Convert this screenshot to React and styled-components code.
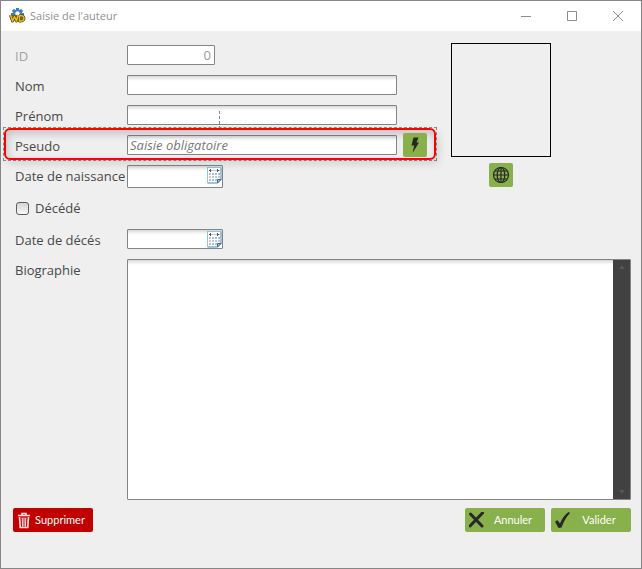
import React from 'react'
import styled, { createGlobalStyle, css } from 'styled-components'

const GlobalStyle = createGlobalStyle`
  * {
    box-sizing: border-box;
  }

  body {
    margin: 0;
    background: #efefef;
    font-family: "Open Sans", "Noto Sans", sans-serif;
    font-size: 13px;
    color: #484848;
  }
`

const Window = styled.div`
  display: flex;
  flex-direction: column;
  min-height: 100vh;
  border: 1px solid #868686;
  background: #efefef;
`

const TitleBar = styled.header`
  display: flex;
  align-items: center;
  height: 30px;
  padding-left: 8px;
  background: white;
`

const Title = styled.h1`
  flex: 1;
  margin: 0 0 0 4px;
  font-size: 11px;
  line-height: 14px;
  font-weight: normal;
  color: #8f8f8f;
`

const WindowButton = styled.button`
  display: flex;
  align-items: center;
  justify-content: center;
  width: 46px;
  height: 30px;
  padding: 0;
  border: none;
  background: none;
  color: #8c8c8c;
`

const Form = styled.form`
  flex: 1;
  display: flex;
  flex-direction: column;
  padding: 12px 10px 36px 12px;
`

const Top = styled.div`
  display: flex;
  gap: 24px;
`

const Fields = styled.div`
  flex: 0 1 414px;
  display: flex;
  flex-direction: column;
  gap: 10px;
  padding-top: 2px;
`

const Row = styled.div`
  display: flex;
  align-items: flex-start;
  height: ${props => props.$height || 20}px;
`

const Label = styled.label`
  flex: none;
  width: 114px;
  padding: 2px 0 0 2px;
  line-height: 18px;
  white-space: nowrap;
  color: ${props => (props.$muted ? '#a2a2a2' : 'inherit')};
`

const boxLook = css`
  border: 1px solid #848484;
  border-radius: 1px;
  background: linear-gradient(#d6d6d6, #f4f4f4 3px, white 5px);
`

const Input = styled.input`
  ${boxLook}
  flex: ${props => (props.$width ? 'none' : '1')};
  width: ${props => (props.$width ? props.$width + 'px' : 'auto')};
  min-width: 0;
  height: 100%;
  margin-right: ${props => (props.$width ? 0 : 30)}px;
  padding: 0 3px;
  font: inherit;
  color: inherit;
  outline: none;

  &:disabled {
    background: white;
    color: #9a9a9a;
    text-align: right;
  }
`

const RequiredInput = styled(Input)`
  margin-right: 6px;
  padding: 0 2px;

  &::placeholder {
    color: #777;
    font-style: italic;
    opacity: 1;
  }
`

// the row is outlined in red, with the dotted selection frame around it
const MarkedRow = styled(Row)`
  position: relative;
  align-items: center;

  &::before {
    content: '';
    position: absolute;
    inset: -8px -10px -6px -10px;
    border: 1px dashed #8a8a8a;
    pointer-events: none;
  }

  &::after {
    content: '';
    position: absolute;
    inset: -7px -9px -5px -9px;
    border: 2px solid #ff0000;
    border-radius: 6px;
    box-shadow: 3px 4px 8px rgba(0, 0, 0, 0.12), inset 2px 4px 8px rgba(0, 0, 0, 0.18);
    pointer-events: none;
  }
`

const Guide = styled.span`
  position: absolute;
  left: 206px;
  top: -24px;
  height: 18px;
  border-left: 1px dashed #8a8a8a;
`

const IconButton = styled.button`
  position: relative;
  z-index: 1;
  flex: none;
  display: flex;
  align-items: center;
  justify-content: center;
  width: 24px;
  height: 24px;
  padding: 0;
  border: none;
  border-radius: 2px;
  background: #88b04b;
  color: #272727;
`

const DateBox = styled.div`
  ${boxLook}
  display: flex;
  align-items: flex-start;
  width: 96px;
  height: 100%;
`

const DateInput = styled.input`
  flex: 1;
  align-self: stretch;
  min-width: 0;
  padding: 0 3px;
  border: none;
  background: none;
  font: inherit;
  outline: none;
`

const CalendarButton = styled.button`
  display: flex;
  padding: 1px 0 0;
  border: none;
  background: none;
`

const CheckLabel = styled.label`
  display: flex;
  align-items: center;
  gap: 6px;
  padding-left: 3px;
  line-height: 20px;
`

const CheckBox = styled.input`
  appearance: none;
  width: 13px;
  height: 13px;
  margin: 0;
  border: 1px solid #5c5c5c;
  border-radius: 3px;
  background: linear-gradient(#d2d6d6, #f8f8f8);
`

const PhotoColumn = styled.div`
  display: flex;
  flex-direction: column;
  align-items: center;
  gap: 6px;
`

const Photo = styled.div`
  width: 100px;
  height: 114px;
  border: 1px solid black;
`

const BioRow = styled.div`
  flex: 1;
  display: flex;
  align-items: stretch;
  min-height: 120px;
  margin: 10px 0 8px;
`

const BioBox = styled.div`
  ${boxLook}
  flex: 1;
  display: flex;
`

const BioText = styled.textarea`
  flex: 1;
  min-width: 0;
  padding: 3px;
  border: none;
  background: none;
  font: inherit;
  resize: none;
  outline: none;
`

const ScrollBar = styled.div`
  display: flex;
  flex-direction: column;
  justify-content: space-between;
  align-items: center;
  width: 17px;
  padding: 5px 0;
  background: #414141;
`

const Footer = styled.footer`
  display: flex;
  gap: 6px;
`

const Button = styled.button`
  display: flex;
  align-items: center;
  width: 80px;
  height: 24px;
  padding: 0 4px;
  border: none;
  border-radius: 2px;
  background: ${props => (props.$danger ? '#c10000' : '#88b04b')};
  color: white;
  font-family: Lato, "Open Sans", sans-serif;
  font-size: 11px;
  line-height: 14px;
  margin-right: ${props => (props.$danger ? 'auto' : 0)};
`

const ButtonText = styled.span`
  flex: 1;
  text-align: center;
`

const LogoIcon = () => (
  <svg width="17" height="16" viewBox="0 0 17 16">
    <g fill="#3f7fb8">
      <circle cx="8.5" cy="6.5" r="5" />
      <path d="M7 0h3v13H7zM2 5h13v3H2z" />
      <path d="M7 0h3v13H7z" transform="rotate(45 8.5 6.5)" />
      <path d="M7 0h3v13H7z" transform="rotate(-45 8.5 6.5)" />
    </g>
    <circle cx="8.5" cy="5.5" r="2.200" fill="white" />
    <g fill="none" strokeLinejoin="round">
      <path d="M1.500 7l2 6 2-4.500 2 4.500 1.500-6M10.500 7.500v5.500c6 .5 6-6 0-5.500" stroke="#4a4020" strokeWidth="3" />
      <path d="M1.500 7l2 6 2-4.500 2 4.500 1.500-6M10.500 7.500v5.500c6 .5 6-6 0-5.500" stroke="#f6bd17" strokeWidth="1.500" />
    </g>
  </svg>
)

const BoltIcon = () => (
  <svg width="12" height="16" viewBox="0 0 12 16">
    <path d="M4.500 0.500H9.500L7.500 5.500H10L3.500 16 5.200 8.500H2.500z" fill="currentColor" />
  </svg>
)

const GlobeIcon = () => (
  <svg width="18" height="18" viewBox="0 0 18 18" fill="none" stroke="currentColor" strokeWidth="1.200">
    <circle cx="9" cy="9" r="7.500" />
    <ellipse cx="9" cy="9" rx="3.800" ry="7.500" />
    <path d="M9 1.500v15M1.500 9h15M2.800 5h12.400M2.800 13h12.400" />
  </svg>
)

const CalendarIcon = () => (
  <svg width="15" height="17" viewBox="0 0 15 17">
    <path d="M.5.5h13.500v12L10.500 16H.5z" fill="white" stroke="#3f86bd" />
    <path d="M.5 16V.5H14" fill="none" stroke="#8cc8e0" />
    <path d="M2 3.500h11" stroke="#c4c4c4" />
    <path d="M3 2h1v3H3zM10 2h1v3h-1zM2 3h2v1H2zM10 3h2v1h-2z" fill="#555" />
    <g strokeWidth="2" strokeDasharray="2 1">
      <path d="M2 7h11" stroke="#a2c0f8" />
      <path d="M2 10h11" stroke="#cbcbcb" />
      <path d="M2 13h8" stroke="#a2c0f8" />
    </g>
    <path d="M10.500 16v-3.500H14z" fill="#a9cbe4" stroke="#2d6ea8" />
  </svg>
)

const TrashIcon = () => (
  <svg width="14" height="17" viewBox="0 0 14 17" fill="none" stroke="#fbe9e9">
    <path d="M1 3.500h12M5 3V1.500h4V3" strokeWidth="1.500" />
    <path d="M2.500 5l.8 10.500h7.400L11.500 5" strokeWidth="1.600" />
    <path d="M5.200 5.500l.3 9M7 5.500v9M8.800 5.500l-.3 9" strokeWidth="1" />
  </svg>
)

const CrossIcon = () => (
  <svg width="16" height="16" viewBox="0 0 16 16">
    <path d="M1.500 2L13 14M13.500 1L1 14" stroke="#272727" strokeWidth="3" strokeLinecap="round" />
  </svg>
)

const CheckIcon = () => (
  <svg width="16" height="16" viewBox="0 0 16 16">
    <path d="M0 9.500l2.500-1.300L5 11.500C7 6.500 10 2.500 13.500 0L15 1C11 5 8.500 10 6.500 15.500L3.500 16z" fill="#272727" />
  </svg>
)

const Arrow = ({ down }) => (
  <svg width="6" height="4" viewBox="0 0 6 4">
    <path d={down ? 'M0 0h6L3 4z' : 'M0 4h6L3 0z'} fill="#565656" />
  </svg>
)

const DateField = ({ id }) => (
  <DateBox>
    <DateInput id={id} type='text' />
    <CalendarButton type='button' aria-label='Calendrier'><CalendarIcon /></CalendarButton>
  </DateBox>
)

const App = () => {
  return (
    <Window>
      <GlobalStyle />
      <TitleBar>
        <LogoIcon />
        <Title>Saisie de l'auteur</Title>
        <WindowButton aria-label='Réduire'>
          <svg width="10" height="10"><path d="M0 5.500h10" stroke="currentColor" /></svg>
        </WindowButton>
        <WindowButton aria-label='Agrandir'>
          <svg width="10" height="10"><path d="M.5.5h9v9h-9z" fill="none" stroke="currentColor" /></svg>
        </WindowButton>
        <WindowButton aria-label='Fermer'>
          <svg width="10" height="10"><path d="M0 0l10 10M10 0L0 10" stroke="currentColor" /></svg>
        </WindowButton>
      </TitleBar>

      <Form onSubmit={e => e.preventDefault()}>
        <Top>
          <Fields>
            <Row>
              <Label htmlFor='id' $muted>ID</Label>
              <Input id='id' $width={88} defaultValue='0' disabled />
            </Row>
            <Row>
              <Label htmlFor='nom'>Nom</Label>
              <Input id='nom' type='text' />
            </Row>
            <Row>
              <Label htmlFor='prenom'>Prénom</Label>
              <Input id='prenom' type='text' />
            </Row>
            <MarkedRow>
              <Guide />
              <Label htmlFor='pseudo'>Pseudo</Label>
              <RequiredInput id='pseudo' type='text' placeholder='Saisie obligatoire' />
              <IconButton type='button' aria-label='Générer'><BoltIcon /></IconButton>
            </MarkedRow>
            <Row $height={23}>
              <Label htmlFor='naissance'>Date de naissance</Label>
              <DateField id='naissance' />
            </Row>
            <Row $height={21}>
              <CheckLabel>
                <CheckBox type='checkbox' />
                Décédé
              </CheckLabel>
            </Row>
            <Row>
              <Label htmlFor='deces'>Date de décés</Label>
              <DateField id='deces' />
            </Row>
          </Fields>
          <PhotoColumn>
            <Photo />
            <IconButton type='button' aria-label='Web'><GlobeIcon /></IconButton>
          </PhotoColumn>
        </Top>

        <BioRow>
          <Label htmlFor='bio'>Biographie</Label>
          <BioBox>
            <BioText id='bio' />
            <ScrollBar>
              <Arrow />
              <Arrow down />
            </ScrollBar>
          </BioBox>
        </BioRow>

        <Footer>
          <Button type='button' $danger>
            <TrashIcon />
            <ButtonText>Supprimer</ButtonText>
          </Button>
          <Button type='button'>
            <CrossIcon />
            <ButtonText>Annuler</ButtonText>
          </Button>
          <Button type='submit'>
            <CheckIcon />
            <ButtonText>Valider</ButtonText>
          </Button>
        </Footer>
      </Form>
    </Window>
  )
}

export default App
